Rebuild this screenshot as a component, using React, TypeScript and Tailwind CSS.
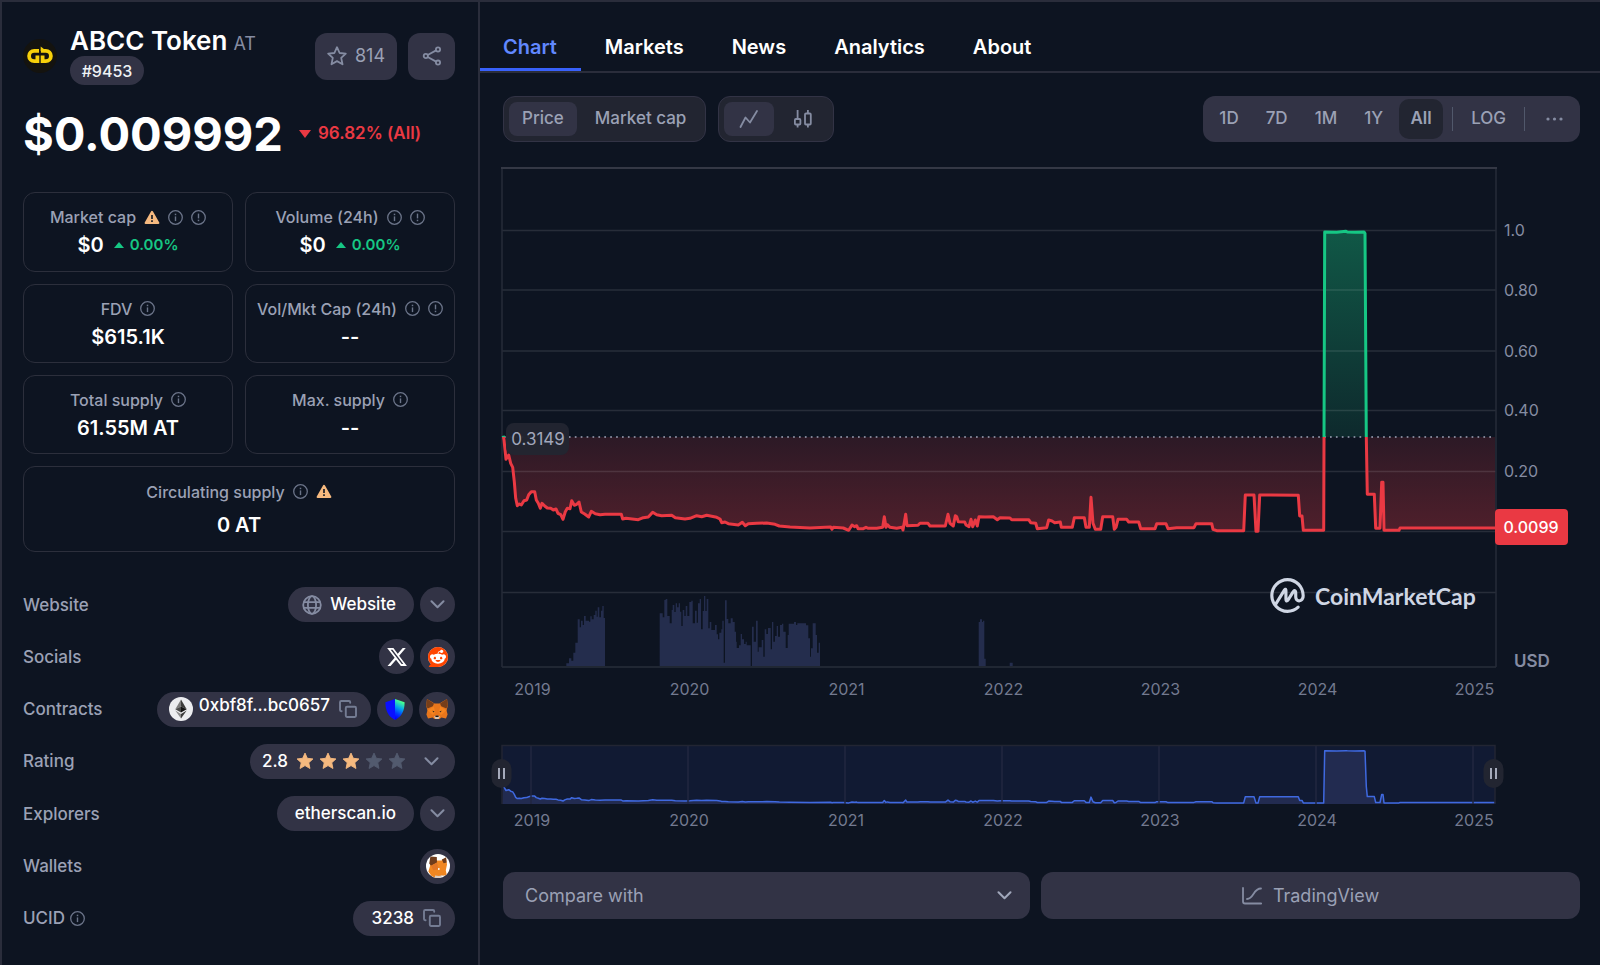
import React from "react";
import type { ReactNode } from "react";
import { FaXTwitter } from "react-icons/fa6";
import { SiCoinmarketcap, SiReddit } from "react-icons/si";

/* ---------- icons ---------- */

function InfoIcon() {
  return (
    <svg className="size-[15px] shrink-0 text-[#6b7489]" viewBox="0 0 15 15" fill="none" stroke="currentColor" aria-hidden="true">
      <circle cx="7.5" cy="7.5" r="6.8" strokeWidth="1.3" />
      <path d="M7.5 6.4v4.7" strokeWidth="1.4" />
      <path d="M7.5 3.7v1.5" strokeWidth="1.5" />
    </svg>
  );
}

function AlertIcon() {
  return (
    <svg className="size-[15px] shrink-0 text-[#6b7489]" viewBox="0 0 15 15" fill="none" stroke="currentColor" aria-hidden="true">
      <circle cx="7.5" cy="7.5" r="6.8" strokeWidth="1.3" />
      <path d="M7.5 3.6v4.8" strokeWidth="1.4" />
      <path d="M7.5 9.7v1.5" strokeWidth="1.5" />
    </svg>
  );
}

function WarnIcon() {
  return (
    <svg className="h-[15px] w-4 shrink-0" viewBox="0 0 16 15" aria-hidden="true">
      <path d="M8 1.8 14.4 13H1.6Z" fill="#f5b97f" stroke="#f5b97f" strokeWidth="2" strokeLinejoin="round" />
      <path d="M8 5v4M8 10.2v1.7" stroke="#0d1421" strokeWidth="1.6" />
    </svg>
  );
}

function Chevron({ className = "text-[#858ca2]" }: { className?: string }) {
  return (
    <svg className={`h-[9px] w-[15px] shrink-0 ${className}`} viewBox="0 0 15 9" fill="none" stroke="currentColor" strokeWidth="2" strokeLinecap="round" strokeLinejoin="round" aria-hidden="true">
      <path d="M1.5 1.3 7.5 7.3 13.5 1.3" />
    </svg>
  );
}

function CopyIcon() {
  return (
    <svg className="size-[18px] shrink-0 text-[#747c93]" viewBox="0 0 18 18" fill="none" stroke="currentColor" strokeWidth="1.9" strokeLinecap="round" strokeLinejoin="round" aria-hidden="true">
      <rect x="6.8" y="6.8" width="10.2" height="10.2" rx="1.2" />
      <path d="M2.6 11.2H2.2a1.2 1.2 0 0 1-1.2-1.2V2.2A1.2 1.2 0 0 1 2.2 1H10a1.2 1.2 0 0 1 1.2 1.2v.6" />
    </svg>
  );
}

function StarIcon({ className, filled }: { className: string; filled?: boolean }) {
  return (
    <svg className={className} viewBox="0 0 20 20" fill={filled ? "currentColor" : "none"} stroke="currentColor" strokeWidth={filled ? 1 : 1.8} strokeLinejoin="round" aria-hidden="true">
      <path d="M10 1.2 12.6 7l6.2.7-4.6 4.2 1.3 6.4L10 15.1l-5.5 3.2 1.3-6.4L1.2 7.7 7.4 7Z" />
    </svg>
  );
}

function ShareIcon() {
  return (
    <svg className="size-5" viewBox="0 0 20 20" fill="none" stroke="#858ca2" strokeWidth="1.8" aria-hidden="true">
      <circle cx="3.8" cy="10" r="2.1" />
      <circle cx="16" cy="3.4" r="2.1" />
      <circle cx="16" cy="16.6" r="2.1" />
      <path d="M5.7 9 14.1 4.4M5.7 11 14.1 15.6" />
    </svg>
  );
}

function TokenLogo() {
  return (
    <svg className="size-[34px] shrink-0" viewBox="0 0 34 34" fill="none" aria-hidden="true">
      <circle cx="17" cy="17" r="17" fill="#14130f" />
      <g stroke="#f7d00a" strokeWidth="3.8">
        <path d="M16 11.9H11.2a5.1 5.1 0 0 0 0 10.2H14.4V16.6" />
        <path d="M17.900 11.9H22.800a5.1 5.1 0 0 1 0 10.2H19.600V16.6" />
      </g>
      <path d="M17.700 7.600 21.500 10.400V12H17.700Z" fill="#f7d00a" />
    </svg>
  );
}

function GlobeIcon() {
  return (
    <svg className="size-5 shrink-0" viewBox="0 0 20 20" fill="none" stroke="#858ca2" strokeWidth="1.8" aria-hidden="true">
      <circle cx="10" cy="10" r="8.8" />
      <ellipse cx="10" cy="10" rx="4.1" ry="8.8" />
      <path d="M1.6 7.2h16.8M1.6 12.8h16.8" />
    </svg>
  );
}

function EthIcon() {
  return (
    <svg className="size-6 shrink-0" viewBox="0 0 24 24" aria-hidden="true">
      <circle cx="12" cy="12" r="12" fill="#ecedf0" />
      <path d="M12 2.6 6.3 12.2 12 9.6Z" fill="#7d7d7d" />
      <path d="M12 2.6 17.7 12.2 12 9.6Z" fill="#3c3c3b" />
      <path d="M6.3 12.2 12 9.6v6Z" fill="#4a4a4a" />
      <path d="M17.7 12.2 12 9.6v6Z" fill="#141414" />
      <path d="M6.3 13.5 12 16.9v4.6Z" fill="#8c8c8c" />
      <path d="M17.7 13.5 12 16.9v4.6Z" fill="#3c3c3b" />
    </svg>
  );
}

function TrustIcon() {
  return (
    <svg className="h-[21px] w-5" viewBox="0 0 20 21" aria-hidden="true">
      <defs>
        <linearGradient id="trust" x1="19" y1="2" x2="10" y2="19" gradientUnits="userSpaceOnUse">
          <stop offset="0.1" stopColor="#48ff91" />
          <stop offset="0.45" stopColor="#00a0f0" />
          <stop offset="0.75" stopColor="#0038ff" />
          <stop offset="1" stopColor="#0500ff" />
        </linearGradient>
      </defs>
      <path d="M10 0 .4 3.2C.4 12 3.4 17.4 10 21Z" fill="#0a10ff" />
      <path d="M10 0 19.6 3.2C19.6 12 16.6 17.4 10 21Z" fill="url(#trust)" />
    </svg>
  );
}

function FoxIcon() {
  return (
    <svg className="h-5 w-[22px]" viewBox="0 0 22 20" aria-hidden="true">
      <path d="M1 0 8.6 4.6h4.8L21 0l.8 6.4-1.2 5 1 4-1.6 4-4.6-1L13.600 20H8.400L6.600 18.400 2 19.400.4 15.400l1-4-1.2-5Z" fill="#e8761c" />
      <path d="M1 0 8 4.600 6.800 7.200 1.6 9.600.2 6.4ZM21 0 14 4.600l1.2 2.600 5.2 2.400 1.4-3.200Z" fill="#763e1a" />
      <path d="M7.6 7.600 9.4 13 7 16l-5.4-4.600ZM14.4 7.600 12.6 13l2.4 3 5.4-4.600Z" fill="#f5841f" />
      <path d="M6.2 11.800 8.4 12.200l-.5 1.300ZM15.8 11.800 13.6 12.200l.5 1.300Z" fill="#2a2320" />
      <path d="M8.2 17.200 11 16.600l2.800.6-.4 1.600-.8 1.200H9.4L8.600 18.800Z" fill="#d8c6b4" />
      <path d="M9.6 16.600h2.800l.3 1.500H9.300Z" fill="#1d1715" />
    </svg>
  );
}

function FoxBadge() {
  return (
    <svg className="size-6" viewBox="0 0 24 24" aria-hidden="true">
      <defs>
        <clipPath id="badge"><circle cx="12" cy="12" r="12" /></clipPath>
      </defs>
      <g clipPath="url(#badge)">
        <rect width="24" height="24" fill="#fff" />
        <path d="M4 5 9.5 6.600h6L20 3.6l1 7-1.2 5.6 1 5-5 .6-3 1.600H8.4l-3-1.400-3-4.400 1.800-6Z" fill="#f08722" />
        <path d="M4.4 2.4 10.8 3 11 8.4 5 11.8 3.2 9.4ZM15.8 5.4 20 3.4l.6 5.2-3 .6Z" fill="#6f3c1b" />
        <path d="M5 11.8 11 8.6l1.6 6.6-5.4 1Z" fill="#e27625" />
        <path d="M9 21.400 13 22l4-1-3 3H9Z" fill="#d9cdc2" />
        <circle cx="12.8" cy="15" r="0.9" fill="#fff" />
      </g>
    </svg>
  );
}

/* ---------- chart data ---------- */

type Point = [number, number];

const at = (ox: number, oy: number, pts: Point[]): Point[] => pts.map(([x, y]) => [ox + x / 3, oy + y / 3]);

const price: Point[] = [
  ...at(490, 410, [
    [40, 77], [42, 90], [48, 148], [56, 135], [62, 160], [68, 172], [73, 215], [77, 265], [82, 287], [88, 282], [94, 285], [102, 272],
    [110, 270], [116, 254], [124, 245], [134, 245], [139, 270], [145, 280], [151, 295], [156, 280], [164, 288], [172, 294],
    [182, 295], [190, 300], [198, 297], [204, 310], [212, 314], [219, 328], [226, 305], [232, 295], [240, 296], [245, 272],
    [253, 286], [260, 283], [267, 276], [274, 306], [284, 312], [296, 321], [304, 304], [316, 311], [330, 314], [345, 313],
    [394, 313], [398, 327], [408, 325], [445, 329], [460, 323], [475, 321], [488, 307], [500, 314], [515, 317], [545, 316],
    [556, 323], [585, 327], [600, 325], [620, 317], [635, 320], [650, 316], [680, 322], [690, 327], [695, 338], [705, 336],
    [715, 341], [745, 345], [757, 337], [766, 347], [775, 341], [800, 340], [830, 339], [855, 343], [868, 348], [900, 351],
    [960, 354], [1022, 351], [1026, 358], [1030, 352], [1060, 354], [1076, 361], [1086, 345], [1094, 350], [1100, 347],
    [1104, 356], [1120, 356], [1128, 352], [1135, 355], [1160, 355], [1178, 352], [1183, 320], [1188, 352], [1192, 344],
  ]),
  ...at(890, 470, [
    [0, 172], [20, 175], [36, 172], [39, 180], [47, 133], [51, 167], [84, 166], [90, 160], [114, 160], [120, 168], [166, 168],
    [174, 133], [180, 160], [190, 168], [196, 137], [200, 140], [205, 155], [224, 156], [228, 165], [237, 170], [243, 148],
    [248, 170], [256, 150], [262, 168], [267, 140], [285, 141], [310, 140], [322, 149], [330, 143], [360, 144], [365, 149],
    [416, 149], [422, 158], [437, 160], [442, 176], [470, 173], [476, 150], [486, 153], [494, 158], [511, 156], [514, 172],
    [547, 172], [553, 143], [583, 143], [588, 172], [598, 172], [603, 82], [609, 160], [616, 178], [632, 178], [638, 140],
    [668, 140], [673, 178], [678, 172], [684, 148], [710, 148], [716, 156], [746, 156], [752, 176], [795, 176], [800, 161],
    [828, 161], [834, 176], [860, 173], [912, 173], [918, 161], [965, 161], [969, 178], [980, 182], [1061, 182], [1066, 75],
    [1092, 75], [1098, 184], [1104, 184], [1109, 75],
  ]),
  ...at(1240, 400, [
    [175, 286], [179, 348], [186, 348], [190, 391], [251, 391], [254, -504], [290, -503], [318, -506], [322, -504],
    [345, -503], [372, -504], [375, -500], [379, 110], [382, 283], [403, 283], [407, 385], [420, 385], [425, 247], [429, 247],
    [432, 391], [477, 391], [480, 384], [766, 384],
  ]),
];

// Steps of [left edge, top]; each step holds until the next one starts.
const volume: { oy: number; ox: number; steps: Point[] }[] = [
  {
    ox: 490, oy: 410,
    steps: [
      [229, 760], [237, 745], [244, 752], [250, 728], [256, 698], [263, 628], [269, 652], [273, 632], [278, 645], [282, 618],
      [287, 632], [297, 635], [301, 619], [305, 628], [311, 615], [316, 602], [320, 620], [323, 592], [328, 622], [333, 602],
      [337, 588], [341, 624], [345, 768], [509, 610], [518, 622], [523, 570], [527, 567], [532, 618], [539, 640], [545, 600],
      [548, 585], [553, 606], [557, 580], [561, 592], [566, 580], [570, 605], [574, 648], [578, 600], [583, 618], [587, 588],
      [592, 618], [598, 576], [604, 572], [608, 640], [615, 602], [620, 638], [624, 580], [629, 567], [633, 658], [638, 603],
      [642, 558], [646, 603], [650, 567], [655, 655], [659, 636], [664, 660], [675, 645], [680, 673], [684, 688], [688, 668],
      [694, 658], [697, 632], [701, 758], [705, 571], [710, 627], [715, 640], [722, 625], [728, 636], [734, 665], [738, 695],
      [740, 714], [747, 706], [752, 672], [756, 688], [762, 702], [767, 695], [770, 706], [782, 768], [786, 650], [791, 695],
      [798, 632], [803, 725], [806, 712], [815, 690], [820, 740], [824, 658], [829, 672], [834, 654], [842, 718], [846, 636],
      [850, 695], [855, 678], [860, 648], [864, 680], [870, 645], [876, 641], [880, 665], [887, 714], [893, 675], [896, 641],
      [912, 636], [918, 645], [922, 640], [948, 646], [955, 685], [960, 740], [963, 715], [968, 640], [977, 675], [981, 728],
      [986, 698], [990, 768],
    ],
  },
  {
    ox: 890, oy: 470,
    steps: [[266, 456], [270, 448], [276, 456], [279, 452], [283, 566], [287, 588], [359, 578], [368, 588]],
  },
];

const BASE = 437;
const join = (pts: Point[]) => pts.map(([x, y]) => `${x.toFixed(1)},${y.toFixed(1)}`).join("L");
const line = `M${join(price)}`;
const area = `${line}L1495,${BASE}L503,${BASE}Z`;
const small: Point[] = price.map(([x, y]) => [x, 803 - ((531 - y) / 301) * 52.5]);
const smallLine = `M${join(small)}`;
const volumePath = volume
  .map(({ ox, oy, steps }) => {
    const first = ox + steps[0][0] / 3;
    return `M${first.toFixed(1)},666` + steps.map(([x, y]) => `H${(ox + x / 3).toFixed(1)}V${Math.min(666, oy + y / 3).toFixed(1)}`).join("") + "Z";
  })
  .join("");

const years = ["2019", "2020", "2021", "2022", "2023", "2024", "2025"];
const ticks: [string, number][] = [["1.0", 230], ["0.80", 290], ["0.60", 351], ["0.40", 410], ["0.20", 471]];

function Handle({ x }: { x: number }) {
  return (
    <g>
      <rect x={x - 10} y="759" width="20" height="29" rx="10" fill="#222531" />
      <path d={`M${x - 2.5} 768v11M${x + 2.5} 768v11`} stroke="#b4bacb" strokeWidth="1.8" />
    </g>
  );
}

function PriceChart() {
  return (
    <svg className="block w-full" viewBox="480 142 1120 730" fontFamily="Inter, sans-serif" fontSize="16" role="img" aria-label="ABCC Token price chart">
      <defs>
        <linearGradient id="loss" x1="0" y1={BASE} x2="0" y2="531" gradientUnits="userSpaceOnUse">
          <stop offset="0" stopColor="#ea3943" stopOpacity="0.14" />
          <stop offset="1" stopColor="#ea3943" stopOpacity="0.3" />
        </linearGradient>
        <linearGradient id="gain" x1="0" y1="230" x2="0" y2={BASE} gradientUnits="userSpaceOnUse">
          <stop offset="0" stopColor="#16c784" stopOpacity="0.38" />
          <stop offset="1" stopColor="#16c784" stopOpacity="0.12" />
        </linearGradient>
        <clipPath id="above"><rect x="500" y="168" width="996" height="269" /></clipPath>
        <clipPath id="below"><rect x="500" y={BASE} width="996" height="230" /></clipPath>
      </defs>

      <path d={area} fill="url(#gain)" clipPath="url(#above)" />
      <path d={area} fill="url(#loss)" clipPath="url(#below)" />
      <path d={volumePath} fill="#242d4d" />
      <path d="M502 230.5H1496M502 290H1496M502 351H1496M502 410.5H1496M502 471.5H1496M502 531.5H1496M502 592.5H1496M502 667H1496" stroke="#fff" strokeOpacity="0.11" strokeWidth="1.5" />
      <path d="M502 168V667M1496 168V667" stroke="#262b38" strokeWidth="1.5" />
      <path d="M501 168H1497" stroke="#343845" strokeWidth="2" />
      <path d={`M504 ${BASE}H1495`} stroke="#a1a7bb" strokeWidth="1.7" strokeDasharray="1.7 4.2" />
      <path d={line} fill="none" stroke="#16c784" strokeWidth="3" strokeLinejoin="round" clipPath="url(#above)" />
      <path d={line} fill="none" stroke="#ea3943" strokeWidth="3" strokeLinejoin="round" clipPath="url(#below)" />

      <rect x="506" y="423" width="63" height="32" rx="8" fill="#222531" fillOpacity="0.96" />
      <text x="538" y="445" textAnchor="middle" fontSize="17" fill="#a1a7bb">0.3149</text>

      {ticks.map(([label, y]) => (
        <text key={label} x="1504" y={y + 6} fill="#858ca2">{label}</text>
      ))}
      <rect x="1495" y="509" width="73" height="36" rx="4" fill="#ea3943" />
      <text x="1531" y="533" textAnchor="middle" fontWeight="500" fill="#fff">0.0099</text>
      <text x="1514" y="667" fontSize="17" fontWeight="600" fill="#858ca2">USD</text>

      <g fill="#cfd6e4">
        <SiCoinmarketcap x={1270} y={578} size={35} color="#cfd6e4" />
        <text x="1315" y="605" fontFamily="Lato, sans-serif" fontSize="23" fontWeight="700">CoinMarketCap</text>
      </g>

      {years.map((year, i) => (
        <text key={year} x={532.5 + i * 157} y="695" textAnchor="middle" fill="#737a90">{year}</text>
      ))}

      <rect x="502" y="745" width="993" height="59" fill="#111a33" />
      <path d={`${smallLine}L1495,804L502,804Z`} fill="#222b50" />
      <path d={smallLine} fill="none" stroke="#3f69e0" strokeWidth="1.5" strokeLinejoin="round" />
      {years.map((year, i) => (
        <path key={year} d={`M${531 + i * 157} 746V804`} stroke="#222741" strokeWidth="1.5" />
      ))}
      <path d="M502 804V745.5H1495V804" fill="none" stroke="#222533" strokeWidth="1.5" />
      <Handle x={501.5} />
      <Handle x={1493.5} />
      {years.map((year, i) => (
        <text key={year} x={532 + i * 157} y="826" textAnchor="middle" fill="#737a90">{year}</text>
      ))}
    </svg>
  );
}

/* ---------- sidebar ---------- */

function Stat({ label, icons, className, children }: { label: string; icons: ReactNode; className: string; children: ReactNode }) {
  return (
    <div className={`flex flex-col items-center justify-center rounded-xl border border-[#2c2f3c] ${className}`}>
      <dt className="flex items-center gap-2 text-base leading-5 font-medium whitespace-nowrap text-[#9ba1b5]">
        {label}
        {icons}
      </dt>
      <dd className="flex items-center text-xl leading-6 font-semibold text-white">{children}</dd>
    </div>
  );
}

function Flat() {
  return (
    <span className="flex items-center gap-[6px] pl-[10px] text-[15px] leading-6 text-[#16c784]">
      <svg className="h-[6px] w-[10px]" viewBox="0 0 10 6" aria-hidden="true"><path d="M5 0 10 6H0Z" fill="currentColor" /></svg>
      0.00%
    </span>
  );
}

function Row({ label, children }: { label: ReactNode; children: ReactNode }) {
  return (
    <div className="flex items-center justify-between">
      <div className="flex items-center gap-[5px] text-[17px] leading-6 font-medium text-[#9ba1b5]">{label}</div>
      <div className="flex items-center gap-[6px]">{children}</div>
    </div>
  );
}

const pill = "flex h-[35px] items-center rounded-full bg-[#323345] text-[17px] font-medium text-white";
const round = "flex size-[35px] items-center justify-center rounded-full bg-[#323345]";
const roundWide = "flex h-[35px] w-9 items-center justify-center rounded-full bg-[#323345]";

function Sidebar() {
  return (
    <aside className="flex w-[480px] shrink-0 flex-col border-x-2 border-[#2a2d3b] pt-[25px] pr-[23px] pb-[29px] pl-[21px]">
      <header className="flex items-center">
        <TokenLogo />
        <div className="ml-[13px]">
          <h1 className="flex h-7 items-baseline gap-[6px] text-[26px] leading-7 font-semibold text-white">
            ABCC Token <span className="text-lg leading-7 font-normal text-[#858ca2]">AT</span>
          </h1>
          <div className="mt-px flex h-[29px] w-[74px] items-center justify-center rounded-full bg-[#323345] text-base font-medium text-[#eff2f5]">#9453</div>
        </div>
        <button className="ml-auto flex h-[47px] w-[82px] items-center justify-center gap-2 rounded-xl bg-[#323345] text-lg text-[#9ba1b5]">
          <StarIcon className="size-5 text-[#858ca2]" />
          814
        </button>
        <button aria-label="Share" className="ml-[11px] flex size-[47px] items-center justify-center rounded-xl bg-[#323345]">
          <ShareIcon />
        </button>
      </header>

      <div className="mt-5 flex h-[58px] items-center gap-4">
        <div className="text-[47px] font-bold text-white">$0.009992</div>
        <div className="flex items-center gap-[7px] text-[17px] font-semibold text-[#ea3943]">
          <svg className="h-2 w-3" viewBox="0 0 12 8" aria-hidden="true"><path d="M0 0H12L6 8Z" fill="currentColor" /></svg>
          96.82% (All)
        </div>
      </div>

      <dl className="mt-[29px] grid grid-cols-2 gap-3">
        <Stat label="Market cap" className="h-20 gap-[6px]" icons={<><WarnIcon /><InfoIcon /><AlertIcon /></>}>$0<Flat /></Stat>
        <Stat label="Volume (24h)" className="h-20 gap-[6px]" icons={<><InfoIcon /><AlertIcon /></>}>$0<Flat /></Stat>
        <Stat label="FDV" className="h-[79px] gap-[6px]" icons={<InfoIcon />}>$615.1K</Stat>
        <Stat label="Vol/Mkt Cap (24h)" className="h-[79px] gap-[6px]" icons={<><InfoIcon /><AlertIcon /></>}>--</Stat>
        <Stat label="Total supply" className="h-[79px] gap-[6px]" icons={<InfoIcon />}>61.55M AT</Stat>
        <Stat label="Max. supply" className="h-[79px] gap-[6px]" icons={<InfoIcon />}>--</Stat>
        <Stat label="Circulating supply" className="col-span-2 h-[86px] gap-[11px]" icons={<><InfoIcon /><WarnIcon /></>}>0 AT</Stat>
      </dl>

      <div className="mt-[35px] flex flex-1 flex-col justify-between">
        <Row label="Website">
          <a href="#website" className={`${pill} gap-2 pr-[18px] pl-[14px]`}><GlobeIcon />Website</a>
          <button aria-label="More websites" className={round}><Chevron /></button>
        </Row>
        <Row label="Socials">
          <a href="#x" aria-label="X" className={round}><FaXTwitter className="size-[22px] text-white" /></a>
          <a href="#reddit" aria-label="Reddit" className={round}>
            <span className="flex rounded-full bg-white"><SiReddit className="size-5 text-[#ff4500]" /></span>
          </a>
        </Row>
        <Row label="Contracts">
          <button className={`${pill} gap-[6px] pr-[14px] pl-3`}>
            <EthIcon />
            <span className="pb-[6px]">0xbf8f...bc0657</span>
            <span className="pl-[3px]"><CopyIcon /></span>
          </button>
          <button aria-label="Add to Trust Wallet" className={roundWide}><TrustIcon /></button>
          <button aria-label="Add to MetaMask" className={roundWide}><FoxIcon /></button>
        </Row>
        <Row label="Rating">
          <button className={`${pill} pr-4 pl-3`}>
            2.8
            <span className="ml-2 flex gap-[5px]">
              {[1, 2, 3].map((n) => <StarIcon key={n} filled className="size-[18px] text-[#f5b97f]" />)}
              {[4, 5].map((n) => <StarIcon key={n} filled className="size-[18px] text-[#525a6e]" />)}
            </span>
            <span className="ml-[18px]"><Chevron /></span>
          </button>
        </Row>
        <Row label="Explorers">
          <a href="#etherscan" className={`${pill} px-[18px]`}>etherscan.io</a>
          <button aria-label="More explorers" className={round}><Chevron /></button>
        </Row>
        <Row label="Wallets">
          <button aria-label="MetaMask" className={round}><FoxBadge /></button>
        </Row>
        <Row label={<>UCID <InfoIcon /></>}>
          <button className={`${pill} gap-[9px] pr-[14px] pl-[19px]`}>3238<CopyIcon /></button>
        </Row>
      </div>
    </aside>
  );
}

/* ---------- main panel ---------- */

const tabs = ["Markets", "News", "Analytics", "About"];
const ranges = ["1D", "7D", "1M", "1Y"];

function Toolbar() {
  return (
    <div className="flex h-[46px] items-stretch justify-between pr-5 pl-[23px]">
      <div className="flex gap-3">
        <div className="flex items-stretch rounded-xl border border-[#323345] bg-[#222531] p-[5px] text-[17px] font-medium text-[#9ba1b5]">
          <button className="rounded-lg bg-[#323345] px-[13px]">Price</button>
          <button className="pr-[14px] pl-[18px]">Market cap</button>
        </div>
        <div className="flex items-stretch gap-1 rounded-xl border border-[#323345] bg-[#222531] p-[5px]">
          <button aria-label="Line chart" className="flex w-[50px] items-center justify-center rounded-lg bg-[#323345]">
            <svg className="size-5" viewBox="0 0 20 20" fill="none" stroke="#858ca2" strokeWidth="1.8" strokeLinecap="round" strokeLinejoin="round" aria-hidden="true">
              <path d="M1.5 18 6.5 8.5 11 13.5 18 2" />
            </svg>
          </button>
          <button aria-label="Candlestick chart" className="flex w-[50px] items-center justify-center">
            <svg className="size-5" viewBox="0 0 20 20" fill="none" stroke="#858ca2" strokeWidth="1.8" aria-hidden="true">
              <rect x="1.9" y="10" width="5.5" height="5.5" rx="1" />
              <rect x="12" y="4.5" width="5.8" height="11" rx="1" />
              <path d="M4.6 1V10M4.6 15.5v3M14.9 1V4.5M14.9 15.5v3" />
            </svg>
          </button>
        </div>
      </div>

      <div className="flex items-center rounded-xl bg-[#323345] pr-[17px] pl-4 text-[17px] font-medium text-[#9ba1b5]">
        <div className="mr-4 flex gap-[27px]">
          {ranges.map((range) => <button key={range}>{range}</button>)}
        </div>
        <button className="h-10 w-11 rounded-[10px] bg-[#222531] font-semibold">All</button>
        <span className="ml-[9px] h-6 w-px bg-[#51586b]" />
        <button className="px-[18px]">LOG</button>
        <span className="h-6 w-px bg-[#51586b]" />
        <button aria-label="More" className="ml-[21px]">
          <svg className="h-1 w-[17px]" viewBox="0 0 17 4" fill="#858ca2" aria-hidden="true">
            <circle cx="2" cy="2" r="1.6" /><circle cx="8.5" cy="2" r="1.6" /><circle cx="15" cy="2" r="1.6" />
          </svg>
        </button>
      </div>
    </div>
  );
}

export default function App() {
  return (
    <div className="flex min-h-screen border-t-2 border-[#2a2d3b] bg-[#0d1421] font-[Inter,sans-serif]">
      <Sidebar />
      <main className="min-w-0 flex-1">
        <nav className="mb-[23px] flex h-[71px] items-end border-b-2 border-[#2a2d3b] text-xl font-semibold">
          <a href="#chart" aria-current="page" className="flex h-[45px] items-center border-b-3 border-[#3861fb] pr-6 pl-[23px] text-[#6188ff]">Chart</a>
          {tabs.map((tab) => (
            <a key={tab} href={`#${tab.toLowerCase()}`} className="flex h-[45px] items-center border-b-3 border-transparent px-6 text-white">{tab}</a>
          ))}
        </nav>
        <Toolbar />
        <PriceChart />
        <div className="grid grid-cols-[527fr_539fr] gap-[11px] pr-5 pl-[23px] text-lg text-[#9ba1b5]">
          <div className="relative">
            <select aria-label="Compare with" className="h-[47px] w-full appearance-none rounded-xl bg-[#323345] px-[22px] font-normal">
              <option>Compare with</option>
            </select>
            <span className="pointer-events-none absolute inset-y-0 right-[18px] flex items-center"><Chevron className="text-[#a1a7bb]" /></span>
          </div>
          <button className="flex h-[47px] items-center justify-center gap-[11px] rounded-xl bg-[#323345]">
            <svg className="size-5" viewBox="0 0 20 20" fill="none" stroke="#858ca2" strokeWidth="1.8" strokeLinecap="round" strokeLinejoin="round" aria-hidden="true">
              <path d="M1 2v13.5a2 2 0 0 0 2 2H19.2" />
              <path d="M5 13c7 0 6-10.5 14-10.5" />
            </svg>
            TradingView
          </button>
        </div>
      </main>
    </div>
  );
}
